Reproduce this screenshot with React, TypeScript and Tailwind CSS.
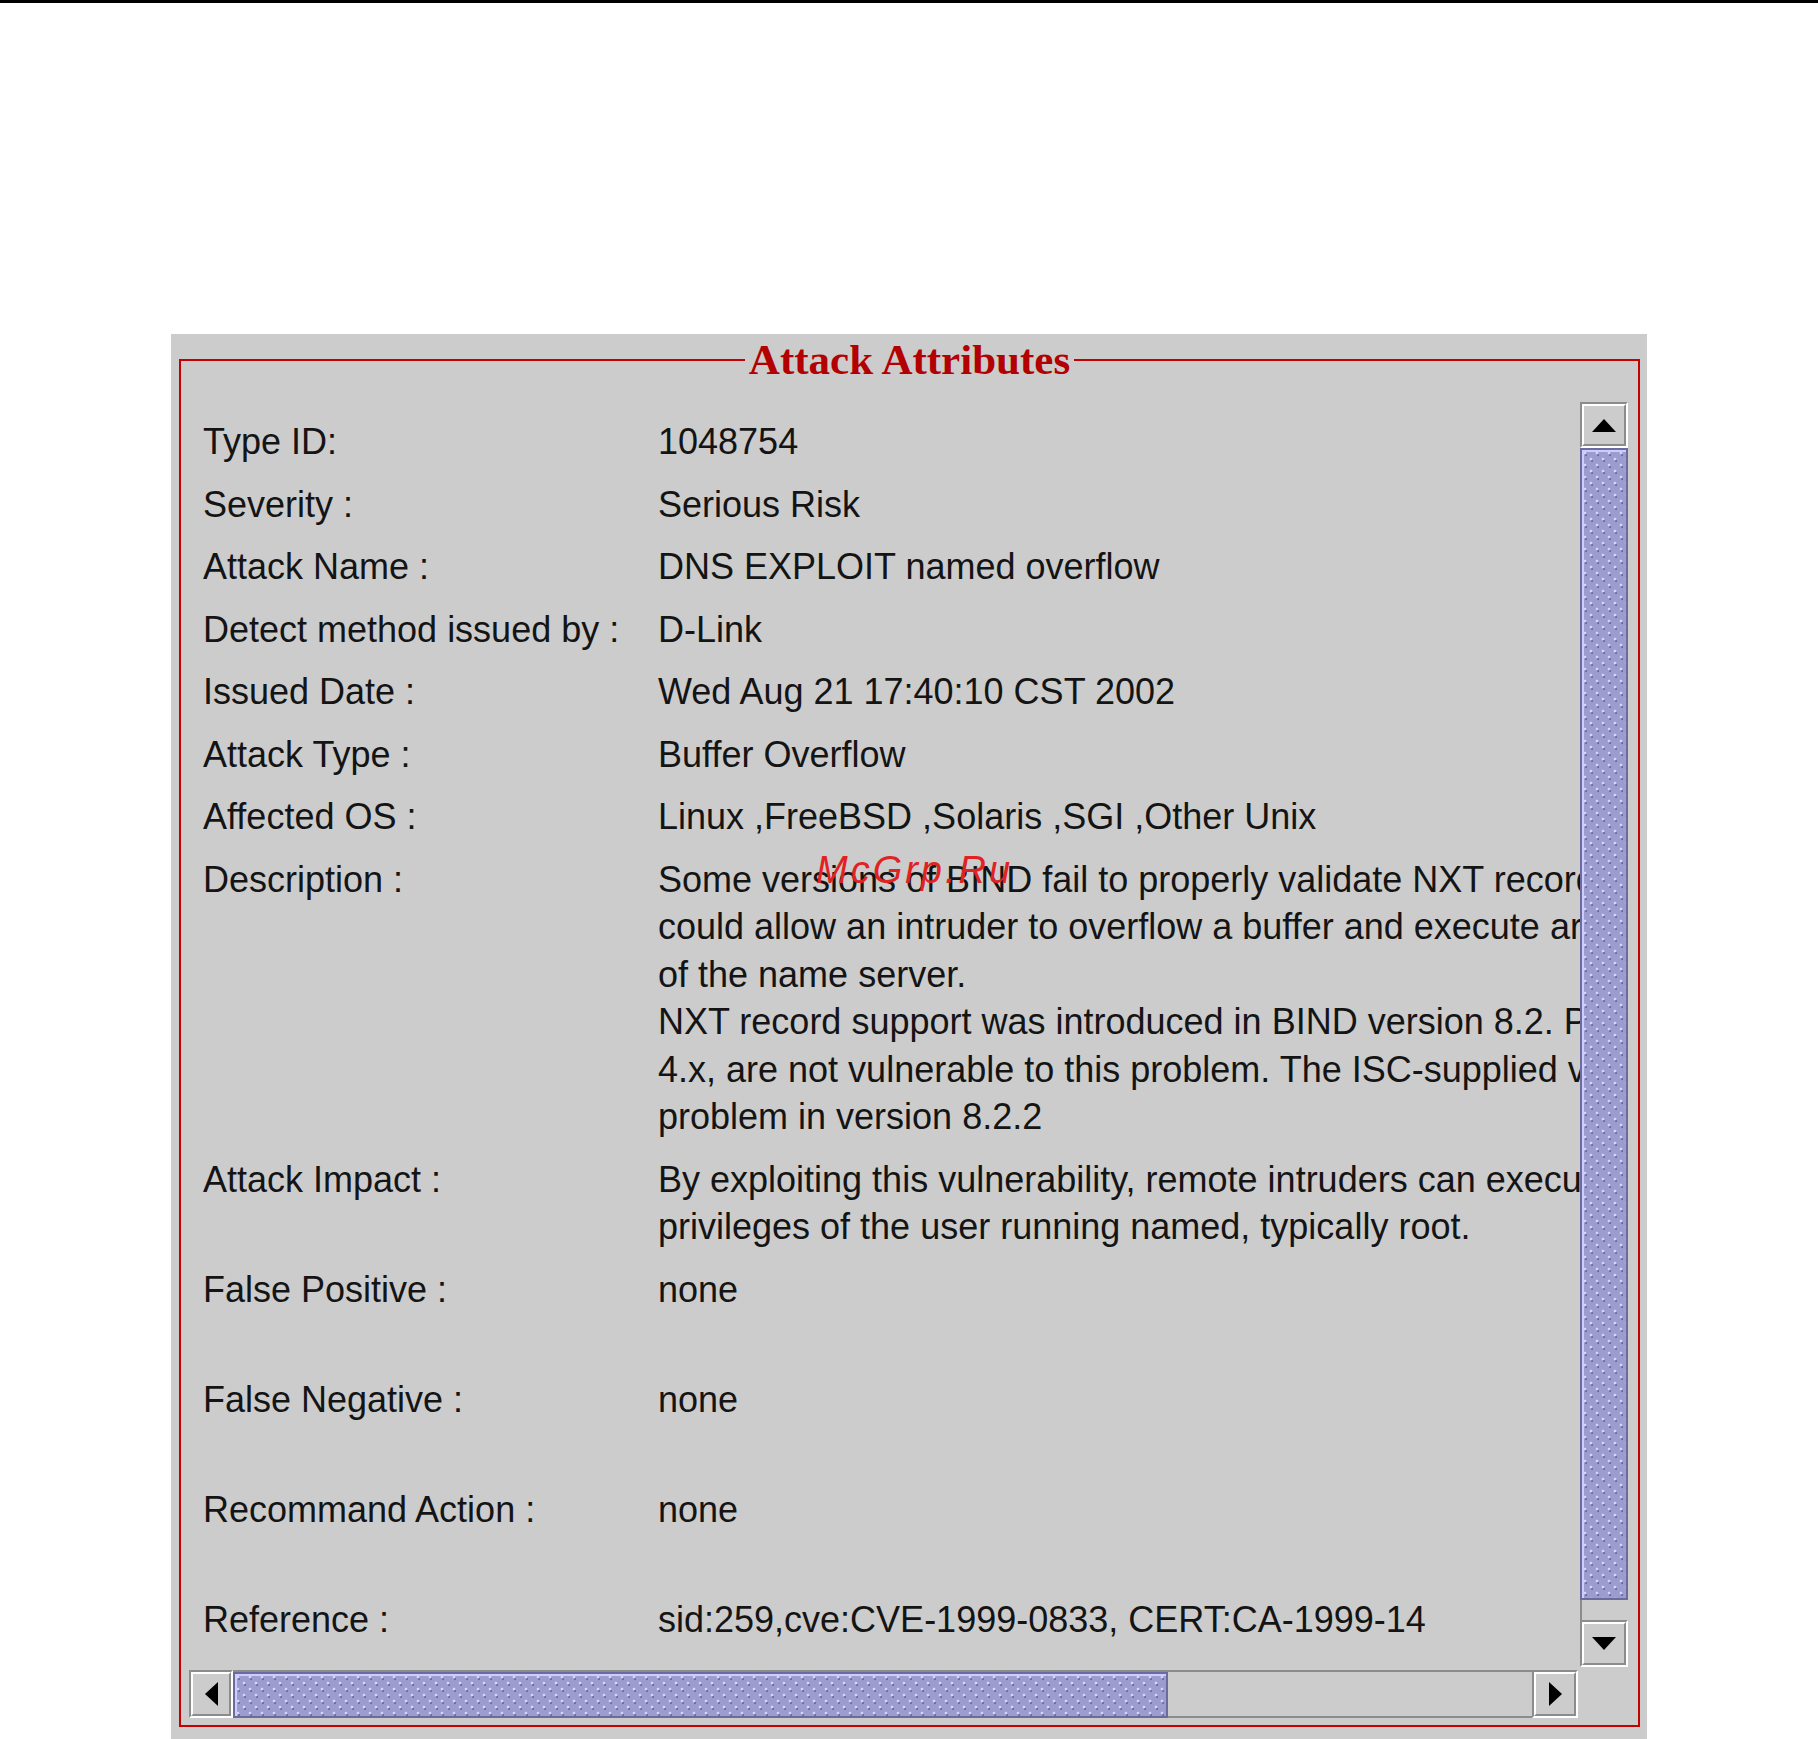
const rows: [string, string[]][] = [
  ["Type ID:", ["1048754"]],
  ["Severity :", ["Serious Risk"]],
  ["Attack Name :", ["DNS EXPLOIT named overflow"]],
  ["Detect method issued by :", ["D-Link"]],
  ["Issued Date :", ["Wed Aug 21 17:40:10 CST 2002"]],
  ["Attack Type :", ["Buffer Overflow"]],
  ["Affected OS :", ["Linux ,FreeBSD ,Solaris ,SGI ,Other Unix"]],
  [
    "Description :",
    [
      "Some versions of BIND fail to properly validate NXT records. This vulnerability",
      "could allow an intruder to overflow a buffer and execute arbitrary code with the privileges",
      "of the name server.",
      "NXT record support was introduced in BIND version 8.2. Prior versions of BIND, including",
      "4.x, are not vulnerable to this problem. The ISC-supplied version of BIND corrected this",
      "problem in version 8.2.2",
    ],
  ],
  [
    "Attack Impact :",
    [
      "By exploiting this vulnerability, remote intruders can execute arbitrary code with the",
      "privileges of the user running named, typically root.",
    ],
  ],
  ["False Positive :", ["none", ""]],
  ["False Negative :", ["none", ""]],
  ["Recommand Action :", ["none", ""]],
  ["Reference :", ["sid:259,cve:CVE-1999-0833, CERT:CA-1999-14", ""]],
];

type Dir = "up" | "down" | "left" | "right";

const Arrow = ({ dir }: { dir: Dir }) => {
  if (dir === "up")
    return (
      <svg width="24" height="13" viewBox="0 0 24 13">
        <polygon points="12,0 24,13 0,13" fill="#000" />
      </svg>
    );
  if (dir === "down")
    return (
      <svg width="24" height="13" viewBox="0 0 24 13">
        <polygon points="0,0 24,0 12,13" fill="#000" />
      </svg>
    );
  if (dir === "left")
    return (
      <svg width="13" height="24" viewBox="0 0 13 24">
        <polygon points="13,0 13,24 0,12" fill="#000" />
      </svg>
    );
  return (
    <svg width="13" height="24" viewBox="0 0 13 24">
      <polygon points="0,0 13,12 0,24" fill="#000" />
    </svg>
  );
};

// Metal style etched button: dark outer top-left, white outer bottom-right
const ArrowButton = ({ dir }: { dir: Dir }) => (
  <div className="h-full w-full border-2 border-t-[#8c8c8c] border-l-[#8c8c8c] border-r-white border-b-white">
    <div className="flex h-full w-full items-center justify-center border-2 border-t-white border-l-white border-r-[#8c8c8c] border-b-[#8c8c8c] bg-[#cccccc]">
      <Arrow dir={dir} />
    </div>
  </div>
);

const bumps =
  "bg-[#9c9cce] bg-[radial-gradient(circle_at_3px_3px,#d4d4ff_1.1px,transparent_1.7px),radial-gradient(circle_at_9px_9px,#d4d4ff_1.1px,transparent_1.7px),radial-gradient(circle_at_4px_5px,#6f6fa0_1px,transparent_1.6px),radial-gradient(circle_at_10px_11px,#6f6fa0_1px,transparent_1.6px)] bg-[length:12px_12px]";

export default function App() {
  return (
    <div className="relative min-h-[1739px] bg-white font-['Liberation_Sans',Arial,sans-serif]">
      <div className="h-[3px] bg-black" />

      <div className="pl-[171px] pt-[331px]">
        <div className="h-[1405px] w-[1476px] bg-[#cccccc] pt-[6px] pl-[8px]">
          <fieldset className="h-[1387px] w-[1461px] border-2 border-[#c40000] px-[8px] pt-[22px]">
            <legend className="mx-auto px-[4px] font-['Liberation_Serif','Times_New_Roman',serif] text-[43px] font-bold leading-[40px] text-[#b30000]">
              Attack Attributes
            </legend>

            {/* scroll pane */}
            <div className="grid h-[1316px] w-[1440px] grid-cols-[1fr_49px] grid-rows-[1fr_48px]">
              {/* viewport */}
              <div className="overflow-hidden pl-[14px] pt-[16px] text-[36px] leading-[47.5px] text-[#141414]">
                <div className="flex flex-col gap-[15px]">
                  {rows.map(([label, lines]) => (
                    <div key={label} className="flex">
                      <div className="w-[455px] shrink-0 whitespace-nowrap">{label}</div>
                      <div className="whitespace-nowrap">
                        {lines.map((l, i) => (
                          <div key={i} className="h-[47.5px]">
                            {l}
                          </div>
                        ))}
                      </div>
                    </div>
                  ))}
                </div>
              </div>

              {/* vertical scrollbar */}
              <div className="flex flex-col pr-[1px]">
                <div className="h-[46px]">
                  <ArrowButton dir="up" />
                </div>
                <div className="flex flex-1 flex-col">
                  <div className={`flex-1 border-2 border-[#6b6b9e] shadow-[inset_2px_2px_0_#ccccff] ${bumps}`} />
                  <div className="h-[20px] border-l-2 border-[#8c8c8c] bg-[#cccccc]" />
                </div>
                <div className="h-[47px]">
                  <ArrowButton dir="down" />
                </div>
                <div className="h-[3px]" />
              </div>

              {/* horizontal scrollbar */}
              <div className="flex pr-[2px]">
                <div className="w-[44px]">
                  <ArrowButton dir="left" />
                </div>
                <div className="flex flex-1 border-t-2 border-[#8c8c8c]">
                  <div className={`w-[935px] border-2 border-[#6b6b9e] shadow-[inset_2px_2px_0_#ccccff] ${bumps}`} />
                  <div className="flex-1 border-b-2 border-[#8c8c8c] bg-[#cccccc]" />
                </div>
                <div className="w-[46px]">
                  <ArrowButton dir="right" />
                </div>
              </div>

              <div />
            </div>
          </fieldset>
        </div>
      </div>

      {/* watermark over the content */}
      <div className="absolute left-[816px] top-[851px] text-[38px] italic leading-none tracking-[3px] text-[#e02222]">
        McGrp.Ru
      </div>
    </div>
  );
}
